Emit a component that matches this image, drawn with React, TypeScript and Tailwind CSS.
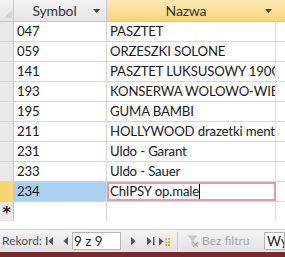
import React from "react";

const rows = [
  ["047", "PASZTET"],
  ["059", "ORZESZKI SOLONE"],
  ["141", "PASZTET LUKSUSOWY 190G"],
  ["193", "KONSERWA WOLOWO-WIEPRZOWA"],
  ["195", "GUMA BAMBI"],
  ["211", "HOLLYWOOD drazetki mentolowe"],
  ["231", "Uldo - Garant"],
  ["233", "Uldo - Sauer"],
];

const Arrow = () => (
  <svg width="7" height="4" viewBox="0 0 7 4" className="shrink-0">
    <path d="M0 0H7L3.5 4Z" fill="#444" />
  </svg>
);

export default function App() {
  return (
    <div
      className="w-[285px] h-[257px] overflow-hidden bg-white flex flex-col text-[13.2px] tracking-[-0.15px] text-[#1a1a1a]"
      style={{ fontFamily: 'Lato, "Liberation Sans", Arial, sans-serif' }}
    >
      {/* header */}
      <div className="flex h-[22px] shrink-0 border-b border-[#c5c5c5]">
        <div className="w-[14px] shrink-0 bg-gradient-to-b from-[#f3f3f3] to-[#e4e4e4] border-r border-[#c9c9c9] relative">
          <svg width="8" height="8" viewBox="0 0 8 8" className="absolute right-[1px] bottom-[3px]">
            <path d="M8 0V8H0Z" fill="#d4d4d4" />
          </svg>
        </div>
        <div className="w-[93px] shrink-0 bg-gradient-to-b from-[#f4f4f4] to-[#e6e6e6] border-r border-[#c9c9c9] flex items-center pl-[2px] pr-[6px]">
          <span className="flex-1 text-center text-[#333] text-[14px]">Symbol</span>
          <Arrow />
        </div>
        <div className="flex-1 bg-gradient-to-b from-[#fde9b2] to-[#f9d57a] flex items-center pr-[13px]">
          <span className="flex-1 text-center text-[#333] text-[14px]">Nazwa</span>
          <Arrow />
        </div>
      </div>
      {/* rows */}
      {rows.map(([s, n]) => (
        <div key={s} className="flex h-[20px] shrink-0 border-b border-[#d6d6d6]">
          <div className="w-[14px] shrink-0 bg-[#e9e9e9] border-r border-[#c9c9c9]" />
          <div className="w-[93px] shrink-0 border-r border-[#d6d6d6] pl-[3px] flex items-center">{s}</div>
          <div className="w-[169px] shrink-0 border-r border-[#e2e2e2] pl-[3px] flex items-center whitespace-nowrap overflow-hidden">{n}</div>
          <div className="flex-1" />
        </div>
      ))}
      {/* current row */}
      <div className="flex h-[20px] shrink-0 border-b border-[#d6d6d6]">
        <div className="w-[14px] shrink-0 bg-[#f9d56e] border-r border-[#c9c9c9]" />
        <div className="w-[93px] shrink-0 bg-[#a8d0f0] border-r border-[#d6d6d6] pl-[3px] flex items-center">234</div>
        <div className="w-[169px] shrink-0 border-2 border-[#e59aa6] pl-[1px] flex items-center whitespace-nowrap">
          ChIPSY op.male<span className="inline-block w-px h-[15px] bg-black" />
        </div>
        <div className="flex-1" />
      </div>
      {/* new row */}
      <div className="flex h-[19px] shrink-0">
        <div className="w-[14px] shrink-0 bg-[#e9e9e9] border-r border-[#c9c9c9] flex items-center justify-center text-[16px] leading-none font-bold pt-[2px]" style={{ fontFamily: '"DejaVu Sans", sans-serif' }}>*</div>
        <div className="w-[93px] shrink-0 border-r border-[#d6d6d6]" />
        <div className="w-[169px] shrink-0 border-r border-[#e2e2e2]" />
        <div className="flex-1" />
      </div>
      <div className="flex-1" />
      {/* nav bar */}
      <div className="h-[23px] shrink-0 bg-gradient-to-b from-[#f4f4f4] to-[#e2e2e2] border-t border-[#d0d0d0] flex items-center text-[12px] text-[#555] tracking-normal">
        <span className="pl-[2px] w-[46px] shrink-0">Rekord:</span>
        <svg width="8" height="8" viewBox="0 0 8 8" className="mr-[9px] shrink-0">
          <rect x="0" y="0" width="1.5" height="8" fill="#555" />
          <path d="M7 0V8L2.5 4Z" fill="#555" />
        </svg>
        <svg width="5" height="8" viewBox="0 0 5 8" className="mr-[4px] shrink-0">
          <path d="M5 0V8L0.5 4Z" fill="#555" />
        </svg>
        <div className="w-[49px] shrink-0 h-[18px] bg-white border border-[#b5b5b5] flex items-center pl-[1px] text-[#222] text-[13.5px]">9 z 9</div>
        <svg width="5" height="8" viewBox="0 0 5 8" className="ml-[10px] shrink-0">
          <path d="M0 0V8L4.5 4Z" fill="#555" />
        </svg>
        <svg width="8" height="8" viewBox="0 0 8 8" className="ml-[11px] shrink-0">
          <path d="M0 0V8L4.5 4Z" fill="#555" />
          <rect x="6" y="0" width="1.5" height="8" fill="#555" />
        </svg>
        <svg width="12" height="9" viewBox="0 0 12 9" className="ml-[4px] shrink-0">
          <path d="M0 0.5V8.5L4.5 4.5Z" fill="#555" />
          <rect x="6" y="1" width="2" height="2" fill="#f0c020" />
          <rect x="9" y="1" width="2" height="2" fill="#f0c020" />
          <rect x="6" y="4" width="2" height="2" fill="#f0c020" />
          <rect x="9" y="4" width="2" height="2" fill="#f0c020" />
          <rect x="6" y="7" width="2" height="2" fill="#e8b010" />
          <rect x="9" y="7" width="2" height="2" fill="#e8b010" />
        </svg>
        <div className="w-px h-[18px] bg-[#c8c8c8] ml-[6px] mr-[9px] shrink-0" />
        <svg width="12" height="12" viewBox="0 0 12 12" className="mr-[3px] shrink-0">
          <path d="M0.5 0.5H10.5L6.5 5V11L4.5 9.5V5Z" fill="#c8c8c8" />
          <path d="M6 7L11 12M11 7L6 12" stroke="#b0b0b0" strokeWidth="1.3" />
        </svg>
        <span className="text-[#a8a8a8] whitespace-nowrap w-[56px] shrink-0">Bez filtru</span>
        <div className="ml-[6px] flex-1 min-w-0 h-[18px] bg-white border border-[#b5b5b5] flex items-center pl-[2px] text-[#222] text-[13.5px] overflow-hidden whitespace-nowrap">Wyszukaj</div>
      </div>
      <div className="h-[5px] shrink-0 bg-[#7a2a2a]" />
    </div>
  );
}
